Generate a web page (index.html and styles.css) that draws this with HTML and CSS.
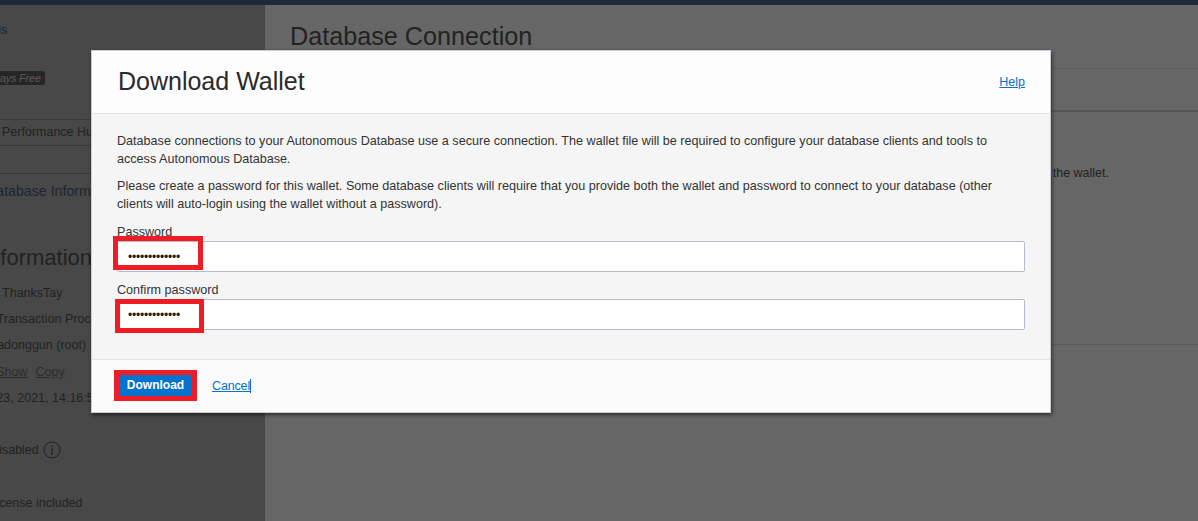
FILE: index.html
```html
<!DOCTYPE html>
<html lang="en">
<head>
<meta charset="utf-8">
<title>Download Wallet</title>
<link rel="stylesheet" href="styles.css">
</head>
<body>
<div class="topbar"></div>
<div class="page">
  <aside class="sidebar">
    <div class="side-inner">
      <div class="crumb">Details</div>
      <div class="badge-row"><span class="badge">Always Free</span></div>
      <div class="hub">Performance Hub</div>
      <div class="tab">Database Information</div>
      <h2 class="side-title">Information</h2>
      <div class="kv k1">Database Name: ThanksTay</div>
      <div class="kv k2">Workload Type: Transaction Processing</div>
      <div class="kv k3">Compartment: tadonggun (root)</div>
      <div class="kv k4">OCID: ...abc <span class="fake-link">Show</span><span class="fake-link">Copy</span></div>
      <div class="kv k5">Created: Mar 23, 2021, 14:16:54 UTC</div>
      <div class="kv k6">Auto Scaling: Disabled
        <svg class="info" width="18" height="18" viewBox="0 0 18 18" aria-hidden="true"><circle cx="9" cy="9" r="8" fill="none" stroke="#222" stroke-width="1"/><path d="M9.4 4.6v1.3M8.3 8h1.2l-.9 5.2h1.2" fill="none" stroke="#222" stroke-width="1.2"/></svg>
      </div>
      <div class="kv k7">License Type: License included</div>
    </div>
  </aside>
  <main class="main">
    <h1 class="main-title">Database Connection</h1>
    <div class="main-band"></div>
    <p class="main-text">the wallet.</p>
    <div class="main-rule"></div>
  </main>
</div>

<section class="modal">
  <header class="modal-head">
    <h2 class="modal-title">Download Wallet</h2>
    <a class="link help" href="#">Help</a>
  </header>
  <div class="modal-body">
    <p class="para">Database connections to your Autonomous Database use a secure connection. The wallet file will be required to configure your database clients and tools to access Autonomous Database.</p>
    <p class="para">Please create a password for this wallet. Some database clients will require that you provide both the wallet and password to connect to your database (other clients will auto-login using the wallet without a password).</p>
    <label class="label first">Password</label>
    <input class="field" type="password" value="abcdefghijklm">
    <label class="label">Confirm password</label>
    <input class="field" type="password" value="abcdefghijklm">
  </div>
  <footer class="modal-foot">
    <button class="btn" type="button">Download</button>
    <a class="link cancel" href="#">Cancel</a>
  </footer>
  <span class="mark mark-a"></span>
  <span class="mark mark-b"></span>
  <span class="mark mark-c"></span>
</section>
</body>
</html>
```

FILE: styles.css
```css
* { box-sizing: border-box; }
html, body { margin: 0; height: 100%; overflow: hidden; }
body { font-family: "Liberation Sans", Arial, sans-serif; font-size: 12.5px; color: #222; background: #666; position: relative; }

.topbar { height: 5px; background: #1d2a3b; }
.page { display: flex; height: 516px; }

.sidebar { width: 265px; flex: none; background: #484848; overflow: hidden; }
.side-inner { width: 500px; }
.crumb { margin: 18px 0 0 -31px; line-height: 14px; color: #222; }
.badge-row { margin: 34px 0 0 -21px; height: 14px; display: flex; }
.badge { display: block; background: #262626; color: #5c5c5c; font-size: 10.5px; font-style: italic; line-height: 14px; padding: 0 0 0 4px; border-radius: 2px; width: 66px; white-space: nowrap; }
.hub { margin: 34px 0 0; padding: 4px 0 0 2px; height: 27px; line-height: 17px; border-top: 1px solid #3a3a3a; border-bottom: 1px solid #3a3a3a; white-space: nowrap; color: #222; }
.tab { margin: 27px 0 0 -14px; padding-top: 7px; border-top: 1px solid #3a3a3a; height: 35px; font-size: 14.2px; line-height: 20px; color: #20242e; white-space: nowrap; }
.side-title { margin: 37px 0 0 -18px; font-size: 22px; font-weight: 400; line-height: 26px; color: #222; white-space: nowrap; }
.kv { line-height: 14px; white-space: nowrap; }
.k1 { margin: 15px 0 0 -95px; }
.k2 { margin: 12px 0 0 -93px; }
.k3 { margin: 12px 0 0 -89px; }
.k4 { margin: 13px 0 0 -76px; }
.k5 { margin: 12px 0 0 -80px; }
.k6 { margin: 36px 0 0 -87px; display: flex; align-items: center; gap: 4px; height: 18px; }
.k7 { margin: 37px 0 0 -91px; }
.fake-link { text-decoration: underline; margin-right: 8px; color: #2c2c2c; }
.info { flex: none; }

.main { flex: 1; min-width: 0; padding-top: 17px; }
.main-title { margin: 0 0 0 25px; font-size: 25.2px; font-weight: 400; line-height: 28px; color: #222; }
.main-band { margin-top: 18px; height: 44px; border-top: 1px solid #5c5c5c; border-bottom: 2px solid #555; }
.main-text { margin: 54px 89px 0 0; text-align: right; white-space: nowrap; line-height: 14px; color: #222; }
.main-rule { margin-top: 164px; border-top: 1px solid #5a5a5a; }

.modal { position: absolute; left: 91px; top: 50px; width: 960px; height: 363px; display: flex; flex-direction: column; background: #fdfdfd; border: 1px solid #c9ced6; box-shadow: 1px 2px 4px rgba(0,0,0,.55); }
.modal-head { height: 63px; flex: none; display: flex; align-items: center; justify-content: space-between; padding: 0 25px 2px 26px; background: #fdfdfd; border-bottom: 1px solid #e4e4e4; }
.modal-title { margin: 0; font-size: 25px; font-weight: 400; line-height: 28px; color: #2a2a2a; }
.link { color: #0572ce; text-decoration: underline; font-size: 12.5px; }
.help { margin-top: 2px; }
.modal-body { height: 246px; flex: none; padding: 18px 25px 0; background: #f5f5f5; border-bottom: 1px solid #e4e4e4; font-size: 12.6px; }
.para { margin: 0 0 9px; line-height: 18px; color: #333; width: 890px; }
.label { display: block; line-height: 14px; color: #333; margin-top: 11px; }
.label.first { margin-top: 12px; }
.field { display: block; width: 908px; height: 31px; margin: 2px 0 0; padding: 0 10px; background: #fff; border: 1px solid #b5bdc9; border-radius: 2px; font: 12px "Liberation Sans", Arial, sans-serif; letter-spacing: -.2px; color: #222; outline: 0; }
.modal-foot { flex: 1; display: flex; align-items: center; gap: 20px; padding: 0 26px 1px; background: #fbfbfb; }
.btn { width: 74px; height: 21px; padding: 0 0 2px 1px; border: 0; background: #0572ce; color: #fff; font: 700 12px "Liberation Sans", Arial, sans-serif; }
.cancel { border-right: 1px solid #0572ce; letter-spacing: -.15px; }

.mark { position: absolute; border: 5px solid #ee1c25; }
.mark-a { left: 21px; top: 185px; width: 90px; height: 34px; }
.mark-b { left: 23px; top: 248px; width: 89px; height: 34px; }
.mark-c { left: 22px; top: 319px; width: 83px; height: 31px; }
```
